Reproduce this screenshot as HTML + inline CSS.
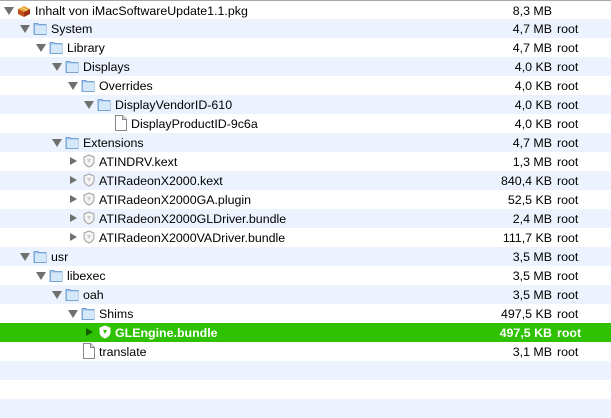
<!DOCTYPE html>
<html><head><style>
body{margin:0;width:611px;height:416px;overflow:hidden;background:#fff;font-family:"Liberation Sans",sans-serif;font-size:12.4px;color:#000;position:relative}
.top{position:absolute;left:0;top:0;width:611px;height:1px;background:#a8a8a8}
.r{position:absolute;left:0;width:611px;height:19px}
.t{position:absolute;top:3px;white-space:nowrap}
.sz{position:absolute;right:59px;top:3px}
.own{position:absolute;left:557px;top:3px}
.tri{position:absolute;top:6px;width:0;height:0}
.down{border-left:5px solid transparent;border-right:5px solid transparent;border-top:8px solid #707070}
.right{border-top:4.5px solid transparent;border-bottom:4.5px solid transparent;border-left:7px solid #707070;top:5px}
.fold{position:absolute;top:2px;width:14px;height:14px}
.sel{color:#fff;font-weight:bold}
.sel .right{border-left-color:#135c00}
</style></head><body>
<div id="rows"></div>
<script>
var d=[
[0,'d','pkg','Inhalt von iMacSoftwareUpdate1.1.pkg','8,3 MB',''],
[1,'d','f','System','4,7 MB','root'],
[2,'d','f','Library','4,7 MB','root'],
[3,'d','f','Displays','4,0 KB','root'],
[4,'d','f','Overrides','4,0 KB','root'],
[5,'d','f','DisplayVendorID-610','4,0 KB','root'],
[6,'n','doc','DisplayProductID-9c6a','4,0 KB','root'],
[3,'d','f','Extensions','4,7 MB','root'],
[4,'r','k','ATINDRV.kext','1,3 MB','root'],
[4,'r','k','ATIRadeonX2000.kext','840,4 KB','root'],
[4,'r','k','ATIRadeonX2000GA.plugin','52,5 KB','root'],
[4,'r','k','ATIRadeonX2000GLDriver.bundle','2,4 MB','root'],
[4,'r','k','ATIRadeonX2000VADriver.bundle','111,7 KB','root'],
[1,'d','f','usr','3,5 MB','root'],
[2,'d','f','libexec','3,5 MB','root'],
[3,'d','f','oah','3,5 MB','root'],
[4,'d','f','Shims','497,5 KB','root'],
[5,'r','k','GLEngine.bundle','497,5 KB','root'],
[4,'n','doc','translate','3,1 MB','root']];
var h='<div class="top"></div>';
for(var i=0;i<22;i++){
 var bg=i%2?'#edf3fe':'#fff';var e=d[i];
 if(i==17)bg='#2ec200';
 h+='<div class="r'+(i==17?' sel':'')+'" style="top:'+(i*19+(i?0:1))+'px;height:'+(i?19:18)+'px;background:'+bg+'">';
 if(e){
  var L=e[0],x=16*L;
  if(e[1]=='d')h+='<div class="tri down" style="left:'+(4+x)+'px"></div>';
  if(e[1]=='r')h+='<div class="tri right" style="left:'+(6+x)+'px"></div>';
  var ix=17+x,svg='';
  if(e[2]=='f')svg='<svg class="fold" style="left:'+ix+'px" viewBox="0 0 14 14"><path d="M1 2.5h4l1 1h7v10H1z" fill="#9cc4ec" stroke="#5b8fc8" stroke-width=".8"/><path d="M2 4.5h11v8.5H2z" fill="#d4e8fa"/></svg>';
  if(e[2]=='pkg')svg='<svg class="fold" style="left:'+ix+'px" viewBox="0 0 14 14"><path d="M1 6l6-3 6 3-6 3z" fill="#e8a040"/><path d="M1 6v5l6 3V9z" fill="#c0501c"/><path d="M13 6v5l-6 3V9z" fill="#a03010"/><path d="M4 4.5l6 3" stroke="#f0d060" stroke-width="1.5"/></svg>';
  if(e[2]=='doc')svg='<svg class="fold" style="left:'+(ix+2)+'px;width:12px;height:16px;top:1px" viewBox="0 0 12 16"><path d="M.5.5h7l4 4v11H.5z" fill="#fff" stroke="#888"/><path d="M7.5.5v4h4" fill="#ddd" stroke="#888"/></svg>';
  if(e[2]=='k')svg='<svg class="fold" style="left:'+(ix+1)+'px" viewBox="0 0 14 14"><path d="M7 1l5 2v4c0 3-2.5 5-5 6-2.5-1-5-3-5-6V3z" fill="'+(i==17?'#fff':'#f4f4f4')+'" stroke="'+(i==17?'#fff':'#a0a0a0')+'"/><path d="M5 5h4l-2 4z" fill="'+(i==17?'#2ec200':'#ccc')+'"/></svg>';
  h+=svg+'<span class="t" style="left:'+(35+x)+'px">'+e[3]+'</span><span class="sz">'+e[4]+'</span><span class="own">'+e[5]+'</span>';
 }
 h+='</div>';
}
document.getElementById('rows').outerHTML=h;
</script>
</body></html>
